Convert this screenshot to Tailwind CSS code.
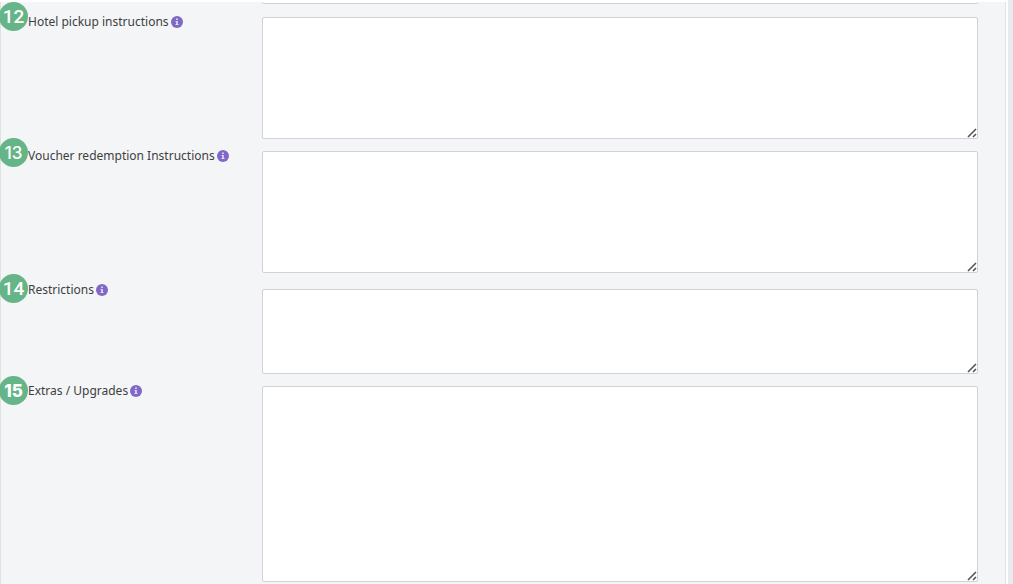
<!DOCTYPE html>
<html lang="en">
<head>
    <meta charset="UTF-8">
    <meta name="viewport" content="width=device-width, initial-scale=1.0">
    <title>Product details</title>
    <script src="https://cdn.jsdelivr.net/npm/@tailwindcss/browser@4"></script>
</head>
<body class="bg-[#e9e9f0] font-['Noto_Sans','Open_Sans',sans-serif] text-[12px] leading-4 text-[#3c3f42] overflow-hidden">
    <svg class="hidden">
        <symbol id="info" viewBox="0 0 12 12">
            <circle cx="6" cy="6" r="6" fill="#8069c6"/>
            <path d="M5.1 2.4h1.7v1.5H5.1zM4.6 4.9h2.2v3.2h.7v1H4.5v-1h.7V5.9h-.6z" fill="#e4def6"/>
        </symbol>
        <symbol id="grip" viewBox="0 0 10 10">
            <path d="M1 9L9 1M6 9L9 6" fill="none" stroke="#555" stroke-width="1.6"/>
        </symbol>
    </svg>

    <main class="mr-[5px] min-h-screen bg-white pt-[2px] pr-[2px]">
        <form class="min-h-screen border-x border-[#e0e1e4] bg-[#f4f5f7] pr-[27px]">
            <!-- end of the previous field -->
            <div class="mb-[13px] ml-[261px]">
                <textarea aria-label="Previous field" class="block h-[2px] w-full resize-none rounded-b-xs border border-t-0 border-[#d0d2d8] bg-white"></textarea>
            </div>

            <div class="relative mb-3 flex">
                <span class="absolute -top-[15px] -left-[2px] flex size-[29px] items-center justify-center rounded-full bg-[#65b588] font-['Roboto',sans-serif] text-[19px] font-medium text-white">12</span>
                <div class="-mt-[3px] flex w-[261px] shrink-0 items-start pl-[27px]">
                    <label for="pickup">Hotel pickup instructions</label>
                    <button type="button" aria-label="Info" class="mt-[2px] ml-[2px]"><svg class="size-3"><use href="#info"/></svg></button>
                </div>
                <div class="relative min-w-0 grow">
                    <textarea id="pickup" class="block h-[122px] w-full resize-none rounded-xs border border-[#d0d2d8] bg-white p-2"></textarea>
                    <svg class="pointer-events-none absolute right-[1px] bottom-[1px] size-[10px]"><use href="#grip"/></svg>
                </div>
            </div>

            <div class="relative mb-3 flex">
                <span class="absolute -top-[13px] -left-[2px] flex size-[29px] items-center justify-center rounded-full bg-[#65b588] font-['Inter',sans-serif] text-[17px] font-medium text-white">13</span>
                <div class="-mt-[3px] flex w-[261px] shrink-0 items-start pl-[27px]">
                    <label for="voucher">Voucher redemption Instructions</label>
                    <button type="button" aria-label="Info" class="mt-[2px] ml-[2px]"><svg class="size-3"><use href="#info"/></svg></button>
                </div>
                <div class="relative min-w-0 grow">
                    <textarea id="voucher" class="block h-[122px] w-full resize-none rounded-xs border border-[#d0d2d8] bg-white p-2"></textarea>
                    <svg class="pointer-events-none absolute right-[1px] bottom-[1px] size-[10px]"><use href="#grip"/></svg>
                </div>
            </div>

            <div class="relative mb-3 flex">
                <span class="absolute -top-[11px] -left-[2px] flex size-[29px] items-center justify-center rounded-full bg-[#65b588] font-['Roboto',sans-serif] text-[19px] font-medium text-white">14</span>
                <div class="-mt-[3px] flex w-[261px] shrink-0 items-start pl-[27px]">
                    <label for="restrictions">Restrictions</label>
                    <button type="button" aria-label="Info" class="mt-[2px] ml-[2px]"><svg class="size-3"><use href="#info"/></svg></button>
                </div>
                <div class="relative mt-1 min-w-0 grow">
                    <textarea id="restrictions" class="block h-[85px] w-full resize-none rounded-xs border border-[#d0d2d8] bg-white p-2"></textarea>
                    <svg class="pointer-events-none absolute right-[1px] bottom-[1px] size-[10px]"><use href="#grip"/></svg>
                </div>
            </div>

            <div class="relative flex">
                <span class="absolute -top-[10px] -left-[2px] flex size-[29px] items-center justify-center rounded-full bg-[#65b588] font-['Inter',sans-serif] text-[17px] font-extrabold text-white">15</span>
                <div class="-mt-[3px] flex w-[261px] shrink-0 items-start pl-[27px]">
                    <label for="extras">Extras / Upgrades</label>
                    <button type="button" aria-label="Info" class="mt-[2px] ml-[2px]"><svg class="size-3"><use href="#info"/></svg></button>
                </div>
                <div class="relative min-w-0 grow">
                    <textarea id="extras" class="block h-[196px] w-full resize-none rounded-xs border border-[#d0d2d8] bg-white p-2"></textarea>
                    <svg class="pointer-events-none absolute right-[1px] bottom-[1px] size-[10px]"><use href="#grip"/></svg>
                </div>
            </div>
        </form>
    </main>
</body>
</html>
